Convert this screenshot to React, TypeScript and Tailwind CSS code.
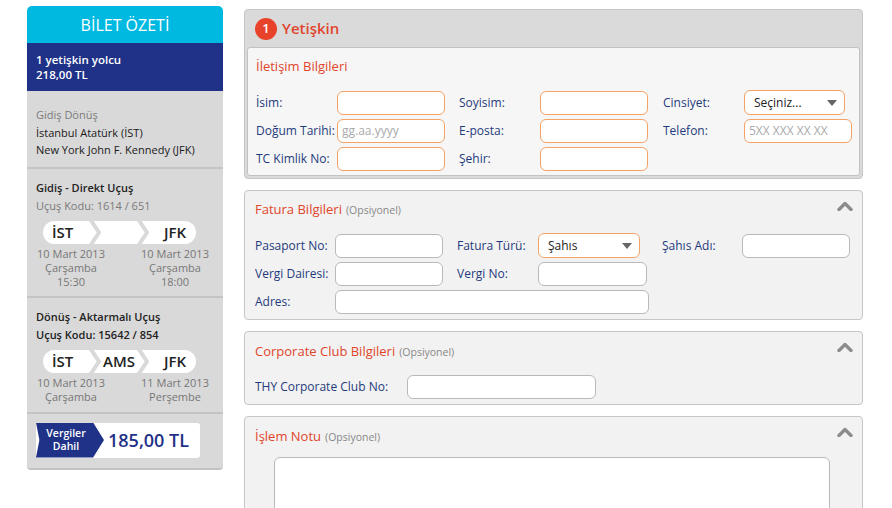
import React from "react";

const font = { fontFamily: '"Open Sans", "Noto Sans", "Liberation Sans", sans-serif' };

function ChevronUp() {
  return (
    <svg width="16" height="10" viewBox="0 0 16 10" className="absolute right-[9px] top-[10px]">
      <polyline points="2,8.5 8,2.5 14,8.5" fill="none" stroke="#8c8c8c" strokeWidth="3.4" strokeLinecap="round" strokeLinejoin="round" />
    </svg>
  );
}

function Sep() {
  return (
    <svg width="12" height="23" viewBox="0 0 12 23" className="shrink-0">
      <polyline points="1,-2 10,11.5 1,25" fill="none" stroke="#d9d9d9" strokeWidth="4" />
    </svg>
  );
}

function Route({ stops }: { stops: string[] }) {
  return (
    <div className="ml-[7px] flex h-[23px] w-[153px] items-center overflow-hidden rounded-full bg-white text-[15px] font-semibold text-[#222]">
      <div className="flex-1 pl-[9px]">{stops[0]}</div>
      <Sep />
      <div className="flex-1 text-center">{stops[1]}</div>
      <Sep />
      <div className="flex-1 pr-[10px] text-right">{stops[2]}</div>
    </div>
  );
}

function Dates({ left, right }: { left: string[]; right: string[] }) {
  return (
    <div className="mt-[3px] flex justify-between pr-[4px] text-[11px] leading-[14px] text-[#777]">
      <div className="w-[70px] text-center">
        {left.map((l) => (
          <div key={l}>{l}</div>
        ))}
      </div>
      <div className="w-[70px] text-center">
        {right.map((l) => (
          <div key={l}>{l}</div>
        ))}
      </div>
    </div>
  );
}

function Sidebar() {
  return (
    <aside className="mt-[6px] w-[196px] shrink-0">
      <div className="flex h-[37px] items-center justify-center rounded-t-[5px] bg-[#00b9e1] text-[16px] text-white">
        BİLET ÖZETİ
      </div>
      <div className="h-[48px] bg-[#1f3287] px-[9px] pt-[9px] text-[11.5px] font-semibold leading-[15px] text-white">
        <div>1 yetişkin yolcu</div>
        <div>218,00 TL</div>
      </div>
      <div className="rounded-b-[4px] border-b-2 border-[#c2c2c2] bg-[#d9d9d9] text-[11px]">
        <div className="border-b-2 border-[#c4c4c4] px-[9px] pb-[8px] pt-[15px] leading-[17.5px]">
          <div className="text-[#7a7a7a]">Gidiş Dönüş</div>
          <div className="text-[#1a1a1a]">İstanbul Atatürk (İST)</div>
          <div className="text-[#1a1a1a]">New York John F. Kennedy (JFK)</div>
        </div>
        <div className="border-b-2 border-[#c4c4c4] px-[9px] pb-[7px] pt-[10px]">
          <div className="font-semibold leading-[18px] text-[#222]">Gidiş - Direkt Uçuş</div>
          <div className="leading-[18px] text-[#7a7a7a]">Uçuş Kodu: 1614 / 651</div>
          <div className="mt-[6px]">
            <Route stops={["İST", "", "JFK"]} />
          </div>
          <Dates left={["10 Mart 2013", "Çarşamba", "15:30"]} right={["10 Mart 2013", "Çarşamba", "18:00"]} />
        </div>
        <div className="border-b-2 border-[#c4c4c4] px-[9px] pb-[8px] pt-[10px]">
          <div className="font-semibold leading-[18px] text-[#222]">Dönüş - Aktarmalı Uçuş</div>
          <div className="font-semibold leading-[18px] text-[#222]">Uçuş Kodu: 15642 / 854</div>
          <div className="mt-[6px]">
            <Route stops={["İST", "AMS", "JFK"]} />
          </div>
          <Dates left={["10 Mart 2013", "Çarşamba"]} right={["11 Mart 2013", "Perşembe"]} />
        </div>
        <div className="px-[9px] pb-[10px] pt-[9px]">
          <div className="relative flex h-[35px] w-[164px] items-center rounded-[3px] bg-white">
            <div
              className="flex h-full w-[68px] flex-col items-center justify-center bg-[#1f3287] pr-[8px] text-[10.5px] font-semibold leading-[13px] text-white"
              style={{ clipPath: "polygon(0 0, 84% 0, 100% 50%, 84% 100%, 0 100%, 5% 50%)" }}
            >
              <div>Vergiler</div>
              <div>Dahil</div>
            </div>
            <div className="pl-[4px] text-[18px] font-semibold text-[#1f3287]">185,00 TL</div>
          </div>
        </div>
      </div>
    </aside>
  );
}

function Input({ w, orange, placeholder }: { w: string; orange?: boolean; placeholder?: string }) {
  return (
    <div
      className={`flex h-[24px] shrink-0 items-center rounded-[6px] border-[1.5px] bg-white px-[4px] text-[12px] text-[#aaa] ${w} ${
        orange ? "border-[#f4a266]" : "border-[#b9b9b9]"
      }`}
    >
      {placeholder}
    </div>
  );
}

function Select({ w, label, orange }: { w: string; label: string; orange?: boolean }) {
  return (
    <div
      className={`flex h-[25px] shrink-0 items-center justify-between rounded-[6px] border-[1.5px] bg-white pl-[9px] pr-[7px] text-[12px] text-[#222] ${w} ${
        orange ? "border-[#f4a266]" : "border-[#b9b9b9]"
      }`}
    >
      <span>{label}</span>
      <svg width="10" height="6" viewBox="0 0 10 6">
        <polygon points="0,0 10,0 5,6" fill="#666" />
      </svg>
    </div>
  );
}

function Field({ label, children, lw = "w-[81px]", w = "w-[203px]" }: { label: string; children?: React.ReactNode; lw?: string; w?: string }) {
  return (
    <div className={`flex shrink-0 items-center ${w}`}>
      <div className={`${lw} shrink-0 text-[12px] text-[#1f3a7c]`}>{label}</div>
      {children}
    </div>
  );
}

function PanelTitle({ title, optional }: { title: string; optional?: boolean }) {
  return (
    <div className="text-[13px] leading-[18px] text-[#e0452c]">
      {title}
      {optional && <span className="ml-[4px] text-[10.5px] text-[#888]">(Opsiyonel)</span>}
    </div>
  );
}

export default function App() {
  return (
    <div className="flex h-[508px] gap-[21px] overflow-hidden bg-white pl-[27px]" style={font}>
      <Sidebar />
      <main className="mt-[9px] flex w-[619px] shrink-0 flex-col gap-[11px]">
        <section className="rounded-[4px] border border-[#c6c6c6] bg-[#dadada] px-[2px] pb-[2px]">
          <div className="flex h-[37px] items-center gap-[5px] pl-[8px]">
            <div className="flex h-[22px] w-[22px] items-center justify-center rounded-full bg-[#e8432a] text-[13px] font-semibold text-white">
              1
            </div>
            <div className="text-[15px] font-semibold text-[#e0452c]">Yetişkin</div>
          </div>
          <div className="rounded-[3px] border border-[#c2c2c2] bg-[#f6f6f6] px-[8px] pb-[4px] pt-[9px]">
            <PanelTitle title="İletişim Bilgileri" />
            <div className="mt-[15px] flex flex-col gap-[4px]">
              <div className="flex">
                <Field label="İsim:"><Input w="w-[108px]" orange /></Field>
                <Field label="Soyisim:" w="w-[204px]"><Input w="w-[108px]" orange /></Field>
                <Field label="Cinsiyet:" w="w-[189px]"><Select w="w-[101px]" label="Seçiniz..." orange /></Field>
              </div>
              <div className="flex">
                <Field label="Doğum Tarihi:"><Input w="w-[108px]" orange placeholder="gg.aa.yyyy" /></Field>
                <Field label="E-posta:" w="w-[204px]"><Input w="w-[108px]" orange /></Field>
                <Field label="Telefon:" w="w-[189px]"><Input w="w-[108px]" orange placeholder="5XX XXX XX XX" /></Field>
              </div>
              <div className="flex">
                <Field label="TC Kimlik No:"><Input w="w-[108px]" orange /></Field>
                <Field label="Şehir:" w="w-[204px]"><Input w="w-[108px]" orange /></Field>
              </div>
            </div>
          </div>
        </section>

        <section className="relative rounded-[4px] border border-[#c6c6c6] bg-[#f2f2f2] px-[10px] pb-[5px] pt-[9px]">
          <PanelTitle title="Fatura Bilgileri" optional />
          <ChevronUp />
          <div className="mt-[14px] flex flex-col gap-[4px]">
            <div className="flex">
              <Field label="Pasaport No:" lw="w-[80px]" w="w-[202px]"><Input w="w-[108px]" /></Field>
              <Field label="Fatura Türü:" lw="w-[81px]" w="w-[205px]"><Select w="w-[102px]" label="Şahıs" orange /></Field>
              <Field label="Şahıs Adı:" lw="w-[80px]" w="w-[188px]"><Input w="w-[108px]" /></Field>
            </div>
            <div className="flex">
              <Field label="Vergi Dairesi:" lw="w-[80px]" w="w-[202px]"><Input w="w-[108px]" /></Field>
              <Field label="Vergi No:" lw="w-[81px]" w="w-[205px]"><Input w="w-[109px]" /></Field>
            </div>
            <div className="flex">
              <Field label="Adres:" lw="w-[80px]" w="w-[400px]"><Input w="w-[314px]" /></Field>
            </div>
          </div>
        </section>

        <section className="relative rounded-[4px] border border-[#c6c6c6] bg-[#f2f2f2] px-[10px] pb-[5px] pt-[10px]">
          <PanelTitle title="Corporate Club Bilgileri" optional />
          <ChevronUp />
          <div className="mt-[14px] flex">
            <Field label="THY Corporate Club No:" lw="w-[152px]" w="w-[400px]"><Input w="w-[189px]" /></Field>
          </div>
        </section>

        <section className="relative h-[120px] shrink-0 rounded-[4px] border border-[#c6c6c6] bg-[#f2f2f2] px-[10px] pt-[10px]">
          <PanelTitle title="İşlem Notu" optional />
          <ChevronUp />
          <div className="ml-[19px] mt-[11px] h-[80px] w-[556px] rounded-[6px] border-[1.5px] border-[#b9b9b9] bg-white" />
        </section>
      </main>
    </div>
  );
}
